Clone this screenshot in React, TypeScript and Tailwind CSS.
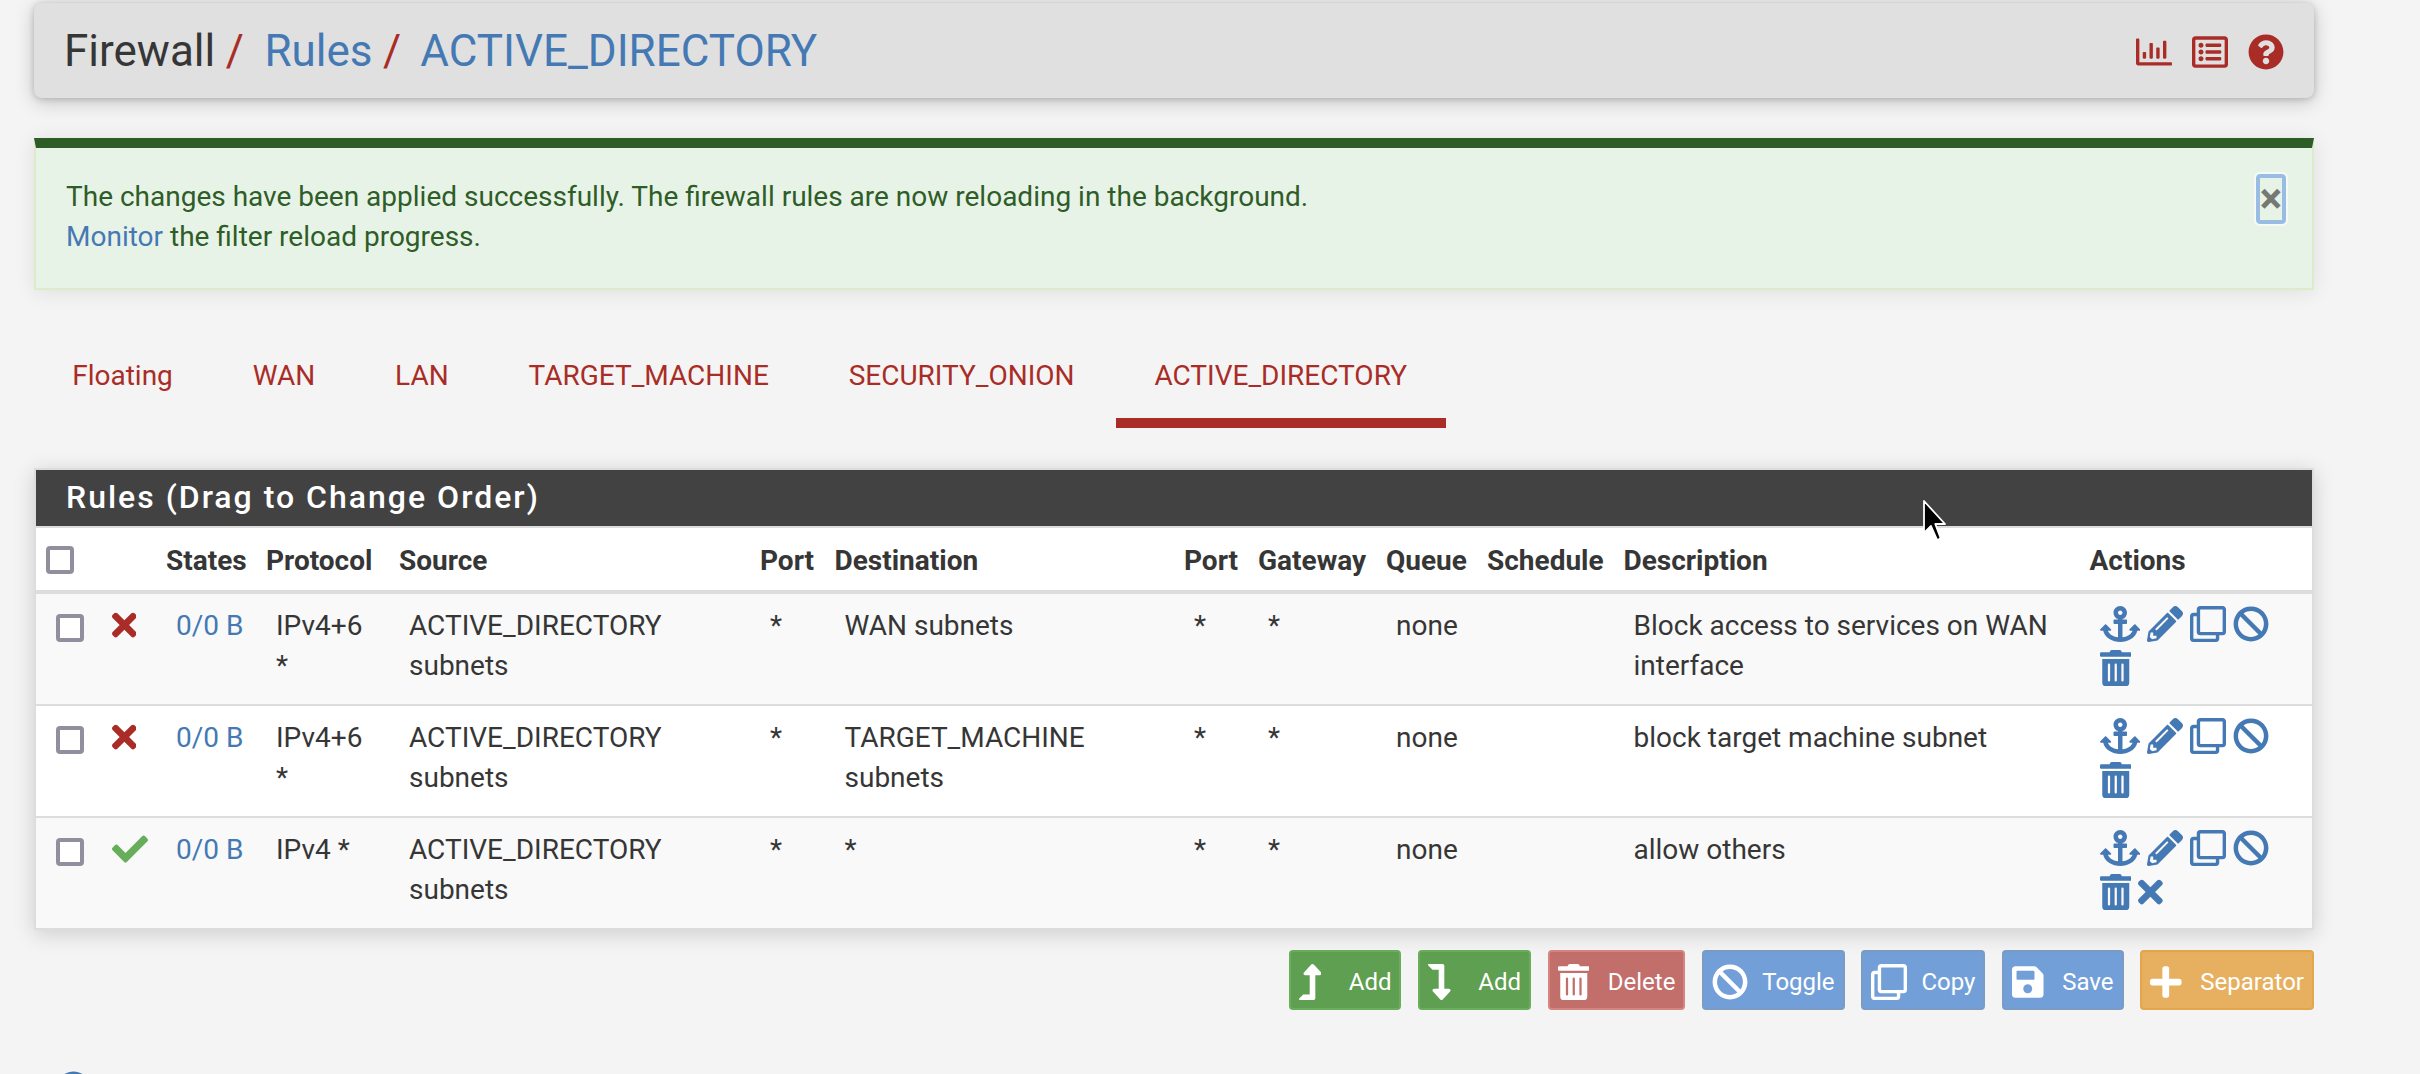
import React from "react";
import {
  FaAnchor,
  FaBan,
  FaCheck,
  FaInfoCircle,
  FaLevelDownAlt,
  FaLevelUpAlt,
  FaPencilAlt,
  FaPlus,
  FaQuestionCircle,
  FaRegChartBar,
  FaRegClone,
  FaRegListAlt,
  FaSave,
  FaTimes,
  FaTrashAlt,
} from "react-icons/fa";
import type { IconType } from "react-icons";

const COLUMNS =
  "grid grid-cols-[55px_65px_100px_133px_361px_74.5px_349.5px_74px_128px_101px_136.5px_466px_1fr] pl-[10px]";

const TABS = ["Floating", "WAN", "LAN", "TARGET_MACHINE", "SECURITY_ONION", "ACTIVE_DIRECTORY"];

const HEADINGS = [
  "States", "Protocol", "Source", "Port", "Destination", "Port",
  "Gateway", "Queue", "Schedule", "Description", "Actions",
];

interface Rule {
  pass: boolean;
  protocol: string[];
  destination: string[];
  description: string[];
}

const RULES: Rule[] = [
  {
    pass: false,
    protocol: ["IPv4+6", "*"],
    destination: ["WAN subnets"],
    description: ["Block access to services on WAN", "interface"],
  },
  {
    pass: false,
    protocol: ["IPv4+6", "*"],
    destination: ["TARGET_MACHINE", "subnets"],
    description: ["block target machine subnet"],
  },
  { pass: true, protocol: ["IPv4 *"], destination: ["*"], description: ["allow others"] },
];

interface ButtonSpec {
  label: string;
  icon: IconType;
  size: string;
  tone: string;
}

// Icon boxes keep the advance width of each glyph at 36px.
const FULL = "h-9 w-9";
const WIDE = "h-9 w-[40.5px]";
const MEDIUM = "h-9 w-[31.5px]";
const SMALL = "h-9 w-[24.75px]";
const NARROW = "h-9 w-[22.5px]";

const GREEN = "bg-[#5e9f51] border-[#69ae5b]";
const BLUE = "bg-[#739fd9] border-[#7a9cc4]";

const BUTTONS: ButtonSpec[] = [
  { label: "Add", icon: FaLevelUpAlt, size: NARROW, tone: GREEN },
  { label: "Add", icon: FaLevelDownAlt, size: NARROW, tone: GREEN },
  { label: "Delete", icon: FaTrashAlt, size: MEDIUM, tone: "bg-[#c26e6b] border-[#d58480]" },
  { label: "Toggle", icon: FaBan, size: FULL, tone: BLUE },
  { label: "Copy", icon: FaRegClone, size: FULL, tone: BLUE },
  { label: "Save", icon: FaSave, size: MEDIUM, tone: BLUE },
  { label: "Separator", icon: FaPlus, size: MEDIUM, tone: "bg-[#e6b060] border-[#e5a54a]" },
];

function Checkbox({ className }: { className: string }) {
  return <span className={`block size-7 rounded-[4px] border-4 border-[#8f8f9d] bg-white ${className}`} />;
}

function Lines({ items }: { items: string[] }) {
  return (
    <div className="pl-[10px] pt-3">
      {items.map((line) => (
        <div key={line} className="whitespace-nowrap">{line}</div>
      ))}
    </div>
  );
}

function Header() {
  return (
    <header className="relative mt-[3px] flex h-[95px] items-center justify-between rounded-[8px] bg-[#e0e0e0] pl-[30px] pr-[30px] shadow-[0_1px_6px_rgba(0,0,0,0.18),0_4px_20px_rgba(0,0,0,0.2)]">
      <h1 className="flex text-[44px] leading-[48px]">
        <span>Firewall</span>
        <span className="ml-[10.5px] mr-[20.5px] text-[#a92d26]">/</span>
        <span className="text-[#4579b4]">Rules</span>
        <span className="ml-[10.5px] mr-[19px] text-[#a92d26]">/</span>
        <span className="text-[#4579b4]">ACTIVE_DIRECTORY</span>
      </h1>
      <div className="flex items-center gap-5 pt-[3px] text-[36px] text-[#a92d26]">
        <FaRegChartBar />
        <FaRegListAlt />
        <FaQuestionCircle />
      </div>
    </header>
  );
}

function Notice() {
  return (
    <div className="mt-10 flex h-[152px] justify-between border-2 border-t-[10px] border-[#dcebc8] border-t-[#2d5c26] bg-[#e8f3e8] pl-[30px] pr-[26px] pt-[28.5px] text-[#2e5d27] shadow-[0_2px_20px_rgba(0,0,0,0.09)]">
      <div>
        <div>The changes have been applied successfully. The firewall rules are now reloading in the background.</div>
        <div>
          <span className="text-[#4579b4]">Monitor</span> the filter reload progress.
        </div>
      </div>
      <button className="-mt-[2.5px] flex h-[50px] w-[30px] items-center justify-center rounded-[4px] border-4 border-[#99bce3] text-[42px] font-bold leading-[42px] text-[#747974] outline-2 outline-[#f5faf6]">
        ×
      </button>
    </div>
  );
}

function Tabs() {
  return (
    <nav className="-ml-[0.5px] mt-[66px] flex h-[72px] gap-[2.5px] text-[#a92d26]">
      {TABS.map((tab) => (
        <div
          key={tab}
          className={`border-b-[10px] px-[38.7px] ${tab === "ACTIVE_DIRECTORY" ? "border-[#a92d26]" : "border-transparent"}`}
        >
          {tab}
        </div>
      ))}
    </nav>
  );
}

function RuleRow({ rule, striped, last }: { rule: Rule; striped: boolean; last: boolean }) {
  return (
    <div className={`${COLUMNS} ${striped ? "bg-[#f9f9f9]" : "bg-white"} ${last ? "h-[110px]" : "h-28 border-b-2 border-[#ddd]"}`}>
      <Checkbox className="ml-[10px] mt-5" />
      <div className="pl-[10.5px] pt-[13px]">
        {rule.pass ? (
          <FaCheck className={`${FULL} text-[#67ae5b]`} />
        ) : (
          <FaTimes className={`${SMALL} text-[#a92d26]`} />
        )}
      </div>
      <div className="pl-[10px] pt-3 text-[#4579b4]">0/0 B</div>
      <Lines items={rule.protocol} />
      <Lines items={["ACTIVE_DIRECTORY", "subnets"]} />
      <Lines items={["*"]} />
      <Lines items={rule.destination} />
      <Lines items={["*"]} />
      <Lines items={["*"]} />
      <Lines items={["none"]} />
      <div />
      <Lines items={rule.description} />
      <div className="flex flex-col gap-2 pl-[10px] pt-3 text-[#4579b4]">
        <div className="flex gap-[7px]">
          <FaAnchor className={WIDE} />
          <FaPencilAlt className={FULL} />
          <FaRegClone className={FULL} />
          <FaBan className={FULL} />
        </div>
        <div className="flex gap-[7px]">
          <FaTrashAlt className={MEDIUM} />
          {rule.pass && <FaTimes className={SMALL} />}
        </div>
      </div>
    </div>
  );
}

function Cursor() {
  return (
    <svg className="absolute left-[1886px] top-[28px] h-[46px] w-[30px]" viewBox="0 0 30 46">
      <path
        d="M2 3v32l7-7 5.500 12.500c1 2.200 4.600.6 3.700-1.700L13.300 26H23z"
        fill="#000"
        stroke="#fff"
        strokeWidth="1.8"
        strokeLinejoin="round"
      />
    </svg>
  );
}

function RulesPanel() {
  return (
    <section className="relative mt-10 border-2 border-[#ddd] bg-white shadow-[0_4px_20px_rgba(0,0,0,0.16)]">
      <h2 className="h-[58px] border-b-2 border-[#ddd] bg-[#424242] pl-[30px] text-[32px] font-medium leading-[54px] tracking-[2px] text-white">
        Rules (Drag to Change Order)
      </h2>
      <div className={`${COLUMNS} h-[66px] border-b-4 border-[#ddd] font-bold`}>
        <Checkbox className="mt-[18px]" />
        <span />
        {HEADINGS.map((heading, i) => (
          <div key={i} className="pt-[12.5px]">{heading}</div>
        ))}
      </div>
      {RULES.map((rule, i) => (
        <RuleRow key={i} rule={rule} striped={i % 2 === 0} last={i === RULES.length - 1} />
      ))}
      <Cursor />
    </section>
  );
}

function Toolbar() {
  return (
    <div className="mt-5 flex justify-end gap-[16.8px]">
      {BUTTONS.map(({ label, icon: Icon, size, tone }, i) => (
        <button
          key={i}
          className={`flex h-[60px] items-center rounded-[4px] border-2 px-2 pt-1 text-2xl leading-9 text-white ${tone}`}
        >
          <span className="w-[50px]">
            <Icon className={size} />
          </span>
          {label}
        </button>
      ))}
    </div>
  );
}

export default function App() {
  return (
    <main className="flow-root h-[1074px] overflow-hidden bg-[#f4f4f4] pl-[34px] pr-[106px] font-['Roboto',sans-serif] text-[28px] leading-[40px] text-[#363636]">
      <Header />
      <Notice />
      <Tabs />
      <RulesPanel />
      <Toolbar />
      <FaInfoCircle className="ml-[21px] mt-[61px] size-[37px] text-[#4579b4]" />
    </main>
  );
}
